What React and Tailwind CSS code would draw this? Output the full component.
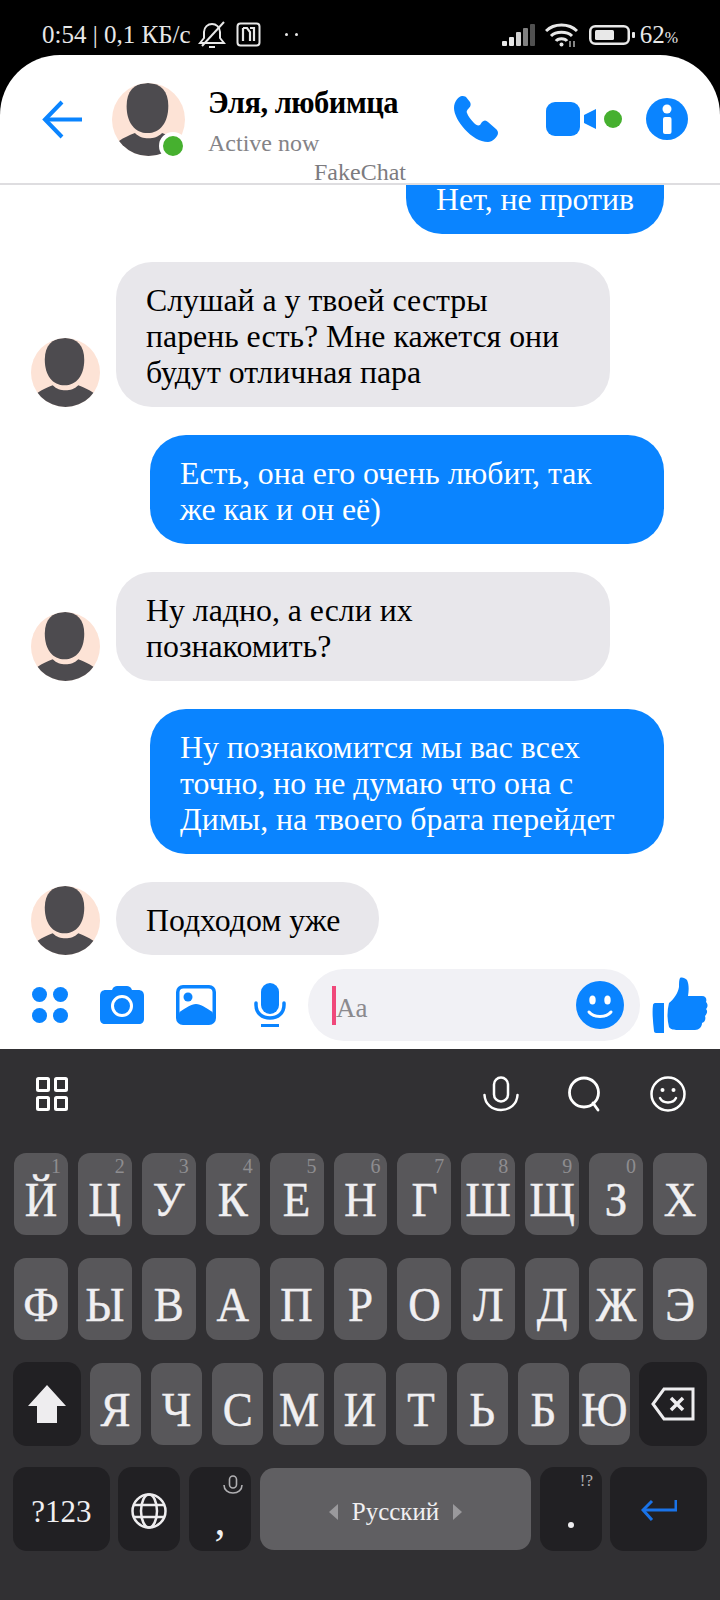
const BLUE = '#0a84ff';

function Avatar({ className }) {
  return (
    <svg viewBox="0 0 70 70" className={className}>
      <defs>
        <clipPath id="avatar-clip">
          <circle cx="35" cy="35" r="35" />
        </clipPath>
      </defs>
      <g clipPath="url(#avatar-clip)">
        <rect width="70" height="70" fill="#fde3d6" />
        <path d="M34 0C47 0 54 8 54 22C54 38 46 48 34 48C22 48 14 38 14 22C14 8 21 0 34 0Z" fill="#4d4b4f" />
        <path d="M6 56C12 52 17 50 22 48C26 52 30 53 35 53C40 53 44 52 48 48C53 50 58 52 64 56L70 70L0 70Z" fill="#4d4b4f" />
      </g>
    </svg>
  );
}

function StatusBar() {
  return (
    <div className="h-[55px] bg-black text-[#e8e8e8] flex items-center pl-[42px] pr-[42px] pt-[14px] shrink-0">
      <span className="text-[25px] leading-none whitespace-nowrap">0:54 | 0,1 КБ/с</span>
      {/* bell off */}
      <svg viewBox="0 0 28 28" className="w-[28px] h-[28px] ml-[7px]" fill="none" stroke="#e8e8e8" strokeWidth="2">
        <path d="M2 22H26L22 17V11C22 6 18 3 14 3C10 3 6 6 6 11V17Z" />
        <path d="M11 26H17" />
        <path d="M26 1L4 25" />
      </svg>
      {/* nfc */}
      <svg viewBox="0 0 25 25" className="w-[25px] h-[25px] ml-[10px]" fill="none" stroke="#e8e8e8" strokeWidth="2">
        <rect x="1.500" y="1.500" width="22" height="22" rx="3" />
        <path d="M7 6V19M7 6H11L14 10V19M18 19V6H14" strokeWidth="2.200" />
      </svg>
      <div className="flex gap-[7px] ml-[24px]">
        <span className="w-[3px] h-[3px] rounded-full bg-[#e8e8e8]" />
        <span className="w-[3px] h-[3px] rounded-full bg-[#e8e8e8]" />
      </div>
      <div className="flex-1" />
      {/* signal */}
      <svg viewBox="0 0 33 22" className="w-[33px] h-[22px]">
        <rect x="0" y="17" width="5" height="5" rx="1" fill="#e8e8e8" />
        <rect x="7" y="13" width="5" height="9" rx="1" fill="#e8e8e8" />
        <rect x="14" y="8" width="5" height="14" rx="1" fill="#d0d0d0" />
        <rect x="21" y="4" width="5" height="18" rx="1" fill="#808080" />
        <rect x="28" y="0" width="5" height="22" rx="1" fill="#505050" />
      </svg>
      {/* wifi */}
      <svg viewBox="0 0 33 24" className="w-[33px] h-[24px] ml-[10px]" fill="none" stroke="#e8e8e8" strokeWidth="3">
        <path d="M1 8C9 0 24 0 32 8" />
        <path d="M6 13C11 8 22 8 27 13" />
        <path d="M11 18C13 15 20 15 22 18" />
        <circle cx="16.500" cy="21.500" r="2" fill="#e8e8e8" stroke="none" />
        <path d="M25 18V24M29 18V24" stroke="#b0b0b0" strokeWidth="1.500" />
      </svg>
      {/* battery */}
      <svg viewBox="0 0 46 20" className="w-[46px] h-[20px] ml-[11px]">
        <rect x="1.250" y="1.250" width="38.500" height="17.500" rx="5" fill="none" stroke="#e8e8e8" strokeWidth="2.500" />
        <rect x="6" y="5" width="19" height="10" rx="1.500" fill="#e8e8e8" />
        <rect x="43" y="7" width="3" height="6" rx="1" fill="#e8e8e8" />
      </svg>
      <span className="text-[25px] leading-none ml-[5px]">62<span className="text-[16px]">%</span></span>
    </div>
  );
}

function Header() {
  return (
    <div className="bg-black shrink-0">
      <div className="relative h-[130px] bg-white rounded-t-[60px] border-b-2 border-[#dedde0] flex items-start">
        <svg viewBox="0 0 40 40" className="w-[40px] h-[40px] ml-[42px] mt-[45px]" fill="none" stroke={BLUE} strokeWidth="4" strokeLinejoin="miter">
          <path d="M20 2L3 19.500L20 37" />
          <path d="M3 19.500H40" />
        </svg>
        <div className="relative ml-[30px] mt-[28px]">
          <Avatar className="w-[73px] h-[73px]" />
          <span className="absolute left-[47px] top-[49px] w-[28px] h-[28px] rounded-full bg-[#46b02f] border-[4px] border-white" />
        </div>
        <div className="ml-[23px] mt-[31px] w-[220px]">
          <div className="text-[30.500px] leading-[34px] font-bold text-black tracking-[-0.5px] whitespace-nowrap">Эля, любимца</div>
          <div className="text-[24px] leading-[28px] text-[#848387] mt-[9px]">Active now</div>
        </div>
        <span className="absolute left-[314px] top-[103px] text-[24px] leading-[28px] text-[#7c7b7f]">FakeChat</span>
        {/* phone */}
        <svg viewBox="0 0 44 46" className="w-[44px] h-[46px] ml-[26px] mt-[41px]">
          <path d="M8 0C5 0 0 5 0 12C0 24 18 46 34 46C38 46 44 41 44 37C44 35 43 34 42 33L34 26C32 24 30 24 28 26L26 29C24 30 22 29 20 27C17 24 14 20 13 17C12 15 14 13 15 12C17 10 17 8 16 6L12 1C11 0 9 0 8 0Z" fill={BLUE} />
        </svg>
        {/* video */}
        <div className="flex items-center ml-[48px] mt-[47px]">
          <span className="w-[34px] h-[34px] rounded-[9px] bg-[#0a84ff]" />
          <svg viewBox="0 0 12 20" className="w-[12px] h-[20px] ml-[4px]">
            <path d="M12 0V20L0 14V6Z" fill={BLUE} />
          </svg>
          <span className="w-[18px] h-[18px] rounded-full bg-[#46b02f] ml-[8px]" />
        </div>
        {/* info */}
        <svg viewBox="0 0 42 42" className="w-[42px] h-[42px] ml-[24px] mt-[43px]">
          <circle cx="21" cy="21" r="21" fill={BLUE} />
          <circle cx="21" cy="11" r="4.500" fill="#fff" />
          <rect x="17" y="19" width="8.500" height="17" rx="2" fill="#fff" />
        </svg>
      </div>
    </div>
  );
}

function Sent({ children }) {
  return (
    <div className="flex justify-end pr-[56px]">
      <div className="w-[514px] rounded-[36px] bg-[#0a84ff] text-white px-[30px] pt-[21px] pb-[16px] text-[31.8px] leading-[36px]">{children}</div>
    </div>
  );
}

function Received({ children, className = 'w-[494px]' }) {
  return (
    <div className="flex items-end pl-[31px]">
      <Avatar className="w-[69px] h-[69px] shrink-0" />
      <div className={`${className} ml-[16px] rounded-[36px] bg-[#e8e7eb] text-black px-[30px] pt-[21px] pb-[16px] text-[31.8px] leading-[36px]`}>{children}</div>
    </div>
  );
}

function Messages() {
  return (
    <div className="h-[783px] shrink-0 bg-white flex flex-col gap-[28px]">
      <div className="flex justify-end pr-[56px]">
        <div className="h-[49px] rounded-b-[36px] bg-[#0a84ff] text-white px-[30px] text-[31.8px] leading-[30px]">Нет, не против</div>
      </div>
      <Received>Слушай а у твоей сестры парень есть? Мне кажется они будут отличная пара</Received>
      <Sent>Есть, она его очень любит, так же как и он её)</Sent>
      <Received>Ну ладно, а если их познакомить?</Received>
      <Sent>Ну познакомится мы вас всех точно, но не думаю что она с Димы, на твоего брата перейдет</Sent>
      <Received className="w-[263px]">Подходом уже</Received>
    </div>
  );
}

function Composer() {
  return (
    <div className="h-[81px] bg-white shrink-0 flex items-start">
      {/* menu dots */}
      <svg viewBox="0 0 36 36" className="w-[36px] h-[36px] ml-[32px] mt-[19px]" fill={BLUE}>
        <circle cx="7.500" cy="7.500" r="7.500" /><circle cx="28.500" cy="7.500" r="7.500" /><circle cx="7.500" cy="28.500" r="7.500" /><circle cx="28.500" cy="28.500" r="7.500" />
      </svg>
      {/* camera */}
      <svg viewBox="0 0 44 38" className="w-[44px] h-[38px] ml-[32px] mt-[18px]">
        <path d="M13 2C14 1 15 0 17 0H27C29 0 30 1 31 2L32 4H38C42 4 44 6 44 10V33C44 36 42 38 39 38H5C2 38 0 36 0 33V10C0 6 2 4 6 4H12Z" fill={BLUE} />
        <circle cx="22" cy="20" r="9.500" fill="none" stroke="#fff" strokeWidth="3" />
      </svg>
      {/* image */}
      <svg viewBox="0 0 40 40" className="w-[40px] h-[40px] ml-[32px] mt-[17px]">
        <rect width="40" height="40" rx="7" fill={BLUE} />
        <rect x="3.500" y="3.500" width="33" height="27" rx="4" fill="#fff" />
        <circle cx="12" cy="12" r="4.500" fill={BLUE} />
        <path d="M3.500 27C10 23 15 19 20 19C25 19 30 23 36.500 27V34H3.500Z" fill={BLUE} />
      </svg>
      {/* mic */}
      <svg viewBox="0 0 32 44" className="w-[32px] h-[44px] ml-[38px] mt-[15px]" fill="none">
        <rect x="7" y="0" width="18" height="31" rx="9" fill={BLUE} />
        <path d="M2 20V22C2 30 8 35 16 35C24 35 30 30 30 22V20" stroke={BLUE} strokeWidth="3.500" strokeLinecap="round" />
        <path d="M7 42.500H25" stroke={BLUE} strokeWidth="3" />
      </svg>
      <div className="w-[332px] h-[72px] ml-[22px] mt-[1px] rounded-[36px] bg-[#f1f1f5] flex items-center shrink-0">
        <span className="w-[4px] h-[39px] ml-[24px] bg-[#f0487a] shrink-0" />
        <span className="text-[27px] leading-[30px] text-[#8b8a8e] mt-[5px]">Aa</span>
        <svg viewBox="0 0 48 48" className="w-[48px] h-[48px] ml-auto mr-[16px]">
          <circle cx="24" cy="24" r="24" fill={BLUE} />
          <ellipse cx="16.500" cy="19" rx="3.200" ry="4.500" fill="#fff" />
          <ellipse cx="31.500" cy="19" rx="3.200" ry="4.500" fill="#fff" />
          <path d="M13 31C18 37 30 37 35 31" fill="none" stroke="#fff" strokeWidth="3" strokeLinecap="round" />
        </svg>
      </div>
      {/* thumb */}
      <svg viewBox="0 0 56 56" className="w-[56px] h-[56px] ml-[12px] mt-[9px]" fill={BLUE}>
        <path d="M1 28C1 27 2 26 3 26H12V56H4C3 56 2 55 2 54C1 45 0 36 1 28Z" />
        <path d="M17 26C22 22 26 16 27 10C27 6 27 3 28 1C30 0 33 1 35 3C37 7 37 13 36 19H50C54 19 55 22 54 25C56 27 56 30 54 32C56 34 55 37 53 39C54 42 53 45 50 46C50 50 47 53 43 53H28C23 53 19 53 17 50C15 42 15 34 17 26Z" />
      </svg>
    </div>
  );
}

function KeyboardTools() {
  return (
    <div className="h-[90px] flex items-center shrink-0">
      <svg viewBox="0 0 32 34" className="w-[32px] h-[34px] ml-[36px]" fill="none" stroke="#fff" strokeWidth="3">
        <rect x="1.500" y="1.500" width="11" height="12" rx="1" />
        <rect x="19.500" y="1.500" width="11" height="12" rx="1" />
        <rect x="1.500" y="20.500" width="11" height="12" rx="1" />
        <rect x="19.500" y="20.500" width="11" height="12" rx="1" />
      </svg>
      <svg viewBox="0 0 36 36" className="w-[36px] h-[36px] ml-auto" fill="none" stroke="#fff" strokeWidth="2.500">
        <rect x="11" y="1.500" width="14" height="24" rx="7" />
        <path d="M1.500 19C2 28 9 34 18 34C27 34 34 28 34.500 19" strokeLinecap="round" />
      </svg>
      <svg viewBox="0 0 36 36" className="w-[36px] h-[36px] ml-[48px]" fill="none" stroke="#fff" strokeWidth="2.800">
        <circle cx="17" cy="16.500" r="14.500" />
        <path d="M26 27L31 34" strokeLinecap="round" />
      </svg>
      <svg viewBox="0 0 36 36" className="w-[36px] h-[36px] ml-[47px] mr-[34px]" fill="none" stroke="#fff" strokeWidth="2.500">
        <circle cx="18" cy="18" r="16.500" />
        <circle cx="12.500" cy="14" r="2" fill="#fff" stroke="none" />
        <circle cx="23.500" cy="14" r="2" fill="#fff" stroke="none" />
        <path d="M10 22C13 28 23 28 26 22" strokeLinecap="round" />
      </svg>
    </div>
  );
}

function Key({ label, hint, className = 'flex-1' }) {
  return (
    <div className={`${className} relative h-[82px] rounded-[12px] bg-[#58575a] text-[#f0eff1] flex items-center justify-center pt-[12px] text-[45px] leading-none [-webkit-text-stroke:0.4px_#f0eff1]`}>
      {hint && <span className="absolute right-[7px] top-[5px] text-[20px] leading-[16px] text-[#8e8d90] [-webkit-text-stroke:0]">{hint}</span>}
      <span className="scale-y-[1.06]">{label}</span>
    </div>
  );
}

function DarkKey({ className, children }) {
  return (
    <div className={`${className} relative h-[84px] rounded-[14px] bg-[#212023] text-[#f0eff1] flex items-center justify-center shrink-0`}>
      {children}
    </div>
  );
}

function Keyboard() {
  const row1 = [['Й', '1'], ['Ц', '2'], ['У', '3'], ['К', '4'], ['Е', '5'], ['Н', '6'], ['Г', '7'], ['Ш', '8'], ['Щ', '9'], ['З', '0'], ['Х']];
  const row2 = ['Ф', 'Ы', 'В', 'А', 'П', 'Р', 'О', 'Л', 'Д', 'Ж', 'Э'];
  const row3 = ['Я', 'Ч', 'С', 'М', 'И', 'Т', 'Ь', 'Б', 'Ю'];

  return (
    <div className="flex-1 bg-[#313033] flex flex-col">
      <KeyboardTools />
      <div className="flex gap-[10px] pl-[14px] pr-[13px] mt-[14px]">
        {row1.map(([label, hint]) => <Key key={label} label={label} hint={hint} />)}
      </div>
      <div className="flex gap-[10px] pl-[14px] pr-[13px] mt-[23px]">
        {row2.map((label) => <Key key={label} label={label} />)}
      </div>
      <div className="flex items-center pl-[13px] pr-[13px] mt-[22px]">
        <DarkKey className="w-[68px]">
          <svg viewBox="0 0 38 38" className="w-[38px] h-[38px]" fill="#eeedef">
            <path d="M19 0L38 21H29V38H9V21H0Z" />
          </svg>
        </DarkKey>
        <div className="flex-1 flex gap-[10px] mx-[9px]">
          {row3.map((label) => <Key key={label} label={label} />)}
        </div>
        <DarkKey className="w-[68px]">
          <svg viewBox="0 0 44 34" className="w-[44px] h-[34px]" fill="none" stroke="#eeedef" strokeWidth="3">
            <path d="M13 2H42V32H13L2 17Z" />
            <path d="M20 11L32 23M32 11L20 23" strokeWidth="3.500" />
          </svg>
        </DarkKey>
      </div>
      <div className="flex items-center pl-[13px] pr-[13px] mt-[21px]">
        <DarkKey className="w-[97px] text-[31px] pt-[6px]">?123</DarkKey>
        <DarkKey className="w-[62px] ml-[8px]">
          <svg viewBox="0 0 36 36" className="w-[36px] h-[36px] mt-[4px]" fill="none" stroke="#eeedef" strokeWidth="2.500">
            <circle cx="18" cy="18" r="16.500" />
            <ellipse cx="18" cy="18" rx="8" ry="16.500" />
            <path d="M3 12H33M3 24H33" />
          </svg>
        </DarkKey>
        <DarkKey className="w-[62px] ml-[9px] text-[44px]">
          <span className="leading-none mt-[24px]">,</span>
          <svg viewBox="0 0 20 20" className="absolute right-[8px] top-[8px] w-[20px] h-[20px]" fill="none" stroke="#b0afb2" strokeWidth="1.600">
            <rect x="6.500" y="1" width="7" height="12" rx="3.500" />
            <path d="M1 10C1 15 5 18 10 18C15 18 19 15 19 10" />
          </svg>
        </DarkKey>
        <div className="w-[271px] h-[82px] ml-[9px] pt-[5px] rounded-[14px] bg-[#605f62] flex items-center justify-center gap-[14px] shrink-0">
          <svg viewBox="0 0 9 16" className="w-[9px] h-[16px]" fill="#9a999c"><path d="M9 0V16L0 8Z" /></svg>
          <span className="text-[25px] leading-none text-[#f0eff1]">Русский</span>
          <svg viewBox="0 0 9 16" className="w-[9px] h-[16px]" fill="#9a999c"><path d="M0 0V16L9 8Z" /></svg>
        </div>
        <DarkKey className="w-[62px] ml-[9px]">
          <span className="w-[6px] h-[6px] rounded-full bg-[#eeedef] mt-[32px]" />
          <span className="absolute right-[9px] top-[4px] text-[17px] leading-[20px] text-[#b0afb2]">!?</span>
        </DarkKey>
        <DarkKey className="w-[97px] ml-[8px]">
          <svg viewBox="0 0 36 24" className="w-[36px] h-[24px] mt-[3px]" fill="none" stroke="#1a73e8" strokeWidth="3">
            <path d="M35 1V11H3" />
            <path d="M11 2L2 11L11 21" />
          </svg>
        </DarkKey>
      </div>
    </div>
  );
}

export default function App() {
  return (
    <div className="w-[720px] h-[1600px] bg-white flex flex-col overflow-hidden font-['Liberation_Serif','Noto_Sans_CJK_SC',serif]">
      <StatusBar />
      <Header />
      <Messages />
      <Composer />
      <Keyboard />
    </div>
  );
}
